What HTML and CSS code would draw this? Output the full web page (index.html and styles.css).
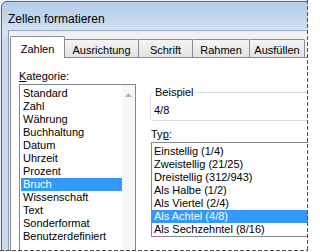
FILE: index.html
```html
<!DOCTYPE html>
<html lang="de">
<head>
<meta charset="utf-8">
<title>Zellen formatieren</title>
<link rel="stylesheet" href="styles.css">
</head>
<body>
<div class="screen">
  <div class="window">
    <div class="titlebar">Zellen formatieren</div>
    <div class="client">
      <div class="tabs">
        <div class="tab selected t-zahlen">Zahlen</div>
        <div class="tab t-ausrichtung">Ausrichtung</div>
        <div class="tab t-schrift">Schrift</div>
        <div class="tab t-rahmen">Rahmen</div>
        <div class="tab t-ausfuellen">Ausfüllen</div>
      </div>
      <div class="panel">
        <div class="col-left">
          <div class="label"><u>K</u>ategorie:</div>
          <div class="listbox cat-list">
            <div class="items">
              <div class="row">Standard</div>
              <div class="row">Zahl</div>
              <div class="row">Währung</div>
              <div class="row">Buchhaltung</div>
              <div class="row">Datum</div>
              <div class="row">Uhrzeit</div>
              <div class="row">Prozent</div>
              <div class="row sel">Bruch</div>
              <div class="row">Wissenschaft</div>
              <div class="row">Text</div>
              <div class="row">Sonderformat</div>
              <div class="row">Benutzerdefiniert</div>
            </div>
            <div class="vscroll">
              <svg class="arrow-up" width="7" height="4" viewBox="0 0 7 4"><polygon points="0,4 3.5,0 7,4" fill="#b4b4b4"/></svg>
            </div>
          </div>
        </div>
        <div class="col-right">
          <fieldset class="group">
            <legend>Beispiel</legend>
            <div class="sample">4/8</div>
          </fieldset>
          <div class="label label-typ">Ty<u>p</u>:</div>
          <div class="listbox type-list">
            <div class="items">
              <div class="row">Einstellig (1/4)</div>
              <div class="row">Zweistellig (21/25)</div>
              <div class="row">Dreistellig (312/943)</div>
              <div class="row">Als Halbe (1/2)</div>
              <div class="row">Als Viertel (2/4)</div>
              <div class="row sel">Als Achtel (4/8)</div>
              <div class="row">Als Sechzehntel (8/16)</div>
            </div>
          </div>
        </div>
      </div>
    </div>
  </div>
  <div class="marquee"></div>
</div>
</body>
</html>
```

FILE: styles.css
```css
* { box-sizing: border-box; }

html, body {
  margin: 0;
  padding: 0;
  background: #ffffff;
}

.screen {
  position: relative;
  width: 309px;
  height: 252px;
  overflow: hidden;
  background: #e9ecf0;
  font-family: "Liberation Sans", Arial, sans-serif;
  font-size: 11px;
  color: #000;
}

.window {
  margin: 1px 0 0 1px;
  width: 430px;
  height: 320px;
  border: 1px solid #5b6a80;
  border-radius: 6px 6px 0 0;
  background: linear-gradient(to bottom, #b4cce8 0px, #c3d6ee 16px, #d6e4f3 29px, #c9d8ea 40px, #c9d8ea 100%);
  overflow: hidden;
}

.titlebar {
  height: 28px;
  padding: 9px 0 0 6px;
  font-size: 12px;
  line-height: 16px;
  color: #000;
  white-space: nowrap;
}

.client {
  margin-left: 6px;
  height: 300px;
  border-top: 1px solid #97a9bf;
  border-left: 1px solid #8d9db3;
  background: #f0f0f0;
  padding: 5px 0 0 1px;
}

.tabs {
  display: flex;
  align-items: flex-end;
  height: 21px;
}

.tab {
  flex: none;
  height: 18px;
  margin-left: -1px;
  padding-top: 4px;
  border: 1px solid #898c95;
  border-bottom: none;
  border-radius: 2px 2px 0 0;
  background: linear-gradient(to bottom, #f4f4f4, #e3e3e3);
  text-align: center;
  line-height: 13px;
  white-space: nowrap;
}

.tab.selected {
  position: relative;
  z-index: 1;
  height: 22px;
  margin-left: 0;
  margin-bottom: -1px;
  padding-top: 6px;
  background: #ffffff;
}

.t-zahlen { width: 55px; }
.t-ausrichtung { width: 75px; }
.t-schrift { width: 55px; }
.t-rahmen { width: 58px; }
.t-ausfuellen { width: 56px; }

.panel {
  display: grid;
  grid-template-columns: 117px 240px;
  column-gap: 14px;
  align-items: start;
  height: 260px;
  border: 1px solid #898c95;
  background: #ffffff;
  padding: 12px 0 0 8px;
}

.label {
  height: 13px;
  line-height: 13px;
  white-space: nowrap;
}

.col-left .label { margin-bottom: 1px; }

.listbox {
  display: flex;
  border: 1px solid #828790;
  background: #ffffff;
}

.items {
  flex: 1;
  padding-top: 2px;
}

.row {
  height: 13px;
  line-height: 13px;
  padding-left: 2px;
  white-space: nowrap;
}

.row.sel {
  background: #3399ff;
  color: #ffffff;
}

.cat-list {
  height: 175px;
}

.cat-list .items {
  padding-left: 1px;
}

.vscroll {
  flex: none;
  width: 13px;
  background: #f6f6f6;
  display: flex;
  justify-content: center;
  align-items: flex-start;
  padding-top: 8px;
}

.arrow-up { display: block; }

.group {
  margin: 16px 0 0 0;
  min-width: 0;
  padding: 5px 3px 3px 3px;
  border: 1px solid #d5dfe5;
  border-radius: 3px;
}

.group legend {
  padding: 0 1px;
  line-height: 13px;
  height: 13px;
}

.sample {
  height: 13px;
  line-height: 13px;
}

.label-typ {
  margin: 7px 0 1px 1px;
}

.type-list {
  margin-left: 1px;
  height: 95px;
}

.marquee {
  position: absolute;
  left: 0;
  top: 0;
  width: 309px;
  height: 252px;
  pointer-events: none;
  background:
    linear-gradient(#ffffff, #ffffff) right top / 1px 100% no-repeat,
    linear-gradient(#ffffff, #ffffff) left bottom / 100% 1px no-repeat,
    repeating-linear-gradient(to bottom, #505050 0 4px, transparent 4px 6px) right 1px top / 1px 251px no-repeat,
    repeating-linear-gradient(to right, #505050 0 4px, transparent 4px 6px) left bottom 1px / 308px 1px no-repeat;
}
```
